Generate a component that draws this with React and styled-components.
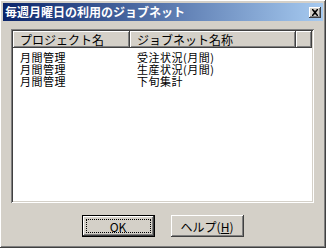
import React from "react";
import styled, { createGlobalStyle } from "styled-components";

const Global = createGlobalStyle`
    html, body {
        margin: 0;
        padding: 0;
        background: #d4d0c8;
    }
    body {
        font-family: "Noto Sans CJK JP", "DejaVu Sans", sans-serif;
        font-size: 12px;
    }
`;

const raised = `
    box-shadow: inset -1px -1px #404040, inset 1px 1px #ffffff,
        inset -2px -2px #808080, inset 2px 2px #d4d0c8;
`;

const Window = styled.div`
    box-sizing: border-box;
    width: 326px;
    height: 248px;
    padding: 3px;
    background: #d4d0c8;
    display: flex;
    flex-direction: column;
    ${raised}
`;
const TitleBar = styled.div`
    height: 18px;
    display: flex;
    align-items: center;
    padding: 0 2px 0 2px;
    background: linear-gradient(to right, #0a246a, #a6caf0);
`;
const Title = styled.span`
    flex: 1;
    color: #fff;
    font-weight: bold;
    font-size: 12px;
    line-height: 18px;
    white-space: nowrap;
`;
const CloseBox = styled.span`
    box-sizing: border-box;
    width: 12px;
    height: 11px;
    background: #d4d0c8;
    display: flex;
    align-items: center;
    justify-content: center;
    ${raised}
`;
const Body = styled.div`
    flex: 1;
    display: flex;
    flex-direction: column;
    padding: 8px 9px 0 8px;
`;
const ListFrame = styled.div`
    box-sizing: border-box;
    height: 174px;
    padding: 2px;
    background: #fff;
    box-shadow: inset 1px 1px #808080, inset -1px -1px #ffffff,
        inset 2px 2px #404040, inset -2px -2px #d4d0c8;
    display: flex;
    flex-direction: column;
`;
const Header = styled.div`
    display: flex;
    height: 17px;
`;
const HeaderCell = styled.div`
    box-sizing: border-box;
    width: ${p => p.w ? p.w + "px" : "auto"};
    flex: ${p => p.w ? "none" : 1};
    background: #d4d0c8;
    padding-left: 7px;
    line-height: 17px;
    color: #000;
    white-space: nowrap;
    overflow: hidden;
    ${raised}
`;
const Rows = styled.div`
    padding-top: 3px;
`;
const Row = styled.div`
    display: flex;
    height: 12px;
    line-height: 12px;
    font-size: 11px;
    letter-spacing: 0.5px;
    color: #000;
`;
const Cell = styled.div`
    box-sizing: border-box;
    width: ${p => p.w}px;
    padding-left: 7px;
    white-space: nowrap;
`;
const Buttons = styled.div`
    display: flex;
    justify-content: center;
    gap: 16px;
    margin-top: 12px;
`;
const Button = styled.div`
    box-sizing: border-box;
    width: 73px;
    height: 22px;
    background: #d4d0c8;
    display: flex;
    align-items: center;
    justify-content: center;
    color: #000;
    padding: ${p => p.$default ? "4px" : "0"};
    ${p => p.$default
        ? `box-shadow: inset 0 0 0 1px #000, inset -2px -2px #404040, inset 2px 2px #ffffff,
            inset -3px -3px #808080;`
        : raised}
`;
const Focus = styled.span`
    flex: 1;
    align-self: stretch;
    border: 1px dotted #000;
    display: flex;
    align-items: center;
    justify-content: center;
`;
const Mnemonic = styled.span`
    text-decoration: underline;
`;

const rows = [
    ["月間管理", "受注状況(月間)"],
    ["月間管理", "生産状況(月間)"],
    ["月間管理", "下旬集計"],
];

export default function App() {
    return <>
        <Global />
        <Window>
            <TitleBar>
                <Title>毎週月曜日の利用のジョブネット</Title>
                <CloseBox>
                    <svg width="8" height="7" viewBox="0 0 8 7">
                        <path d="M1 0h1l2 2 2-2h1v1L5 3.5 7 6v1H6L4 5 2 7H1V6l2-2.5L1 1z" fill="#000" />
                    </svg>
                </CloseBox>
            </TitleBar>
            <Body>
                <ListFrame>
                    <Header>
                        <HeaderCell w={117}>プロジェクト名</HeaderCell>
                        <HeaderCell w={166}>ジョブネット名称</HeaderCell>
                        <HeaderCell />
                    </Header>
                    <Rows>
                        {rows.map((r, i) => <Row key={i}>
                            <Cell w={117}>{r[0]}</Cell>
                            <Cell w={166}>{r[1]}</Cell>
                        </Row>)}
                    </Rows>
                </ListFrame>
                <Buttons>
                    <Button $default><Focus>OK</Focus></Button>
                    <Button>ヘルプ(<Mnemonic>H</Mnemonic>)</Button>
                </Buttons>
            </Body>
        </Window>
    </>;
}
